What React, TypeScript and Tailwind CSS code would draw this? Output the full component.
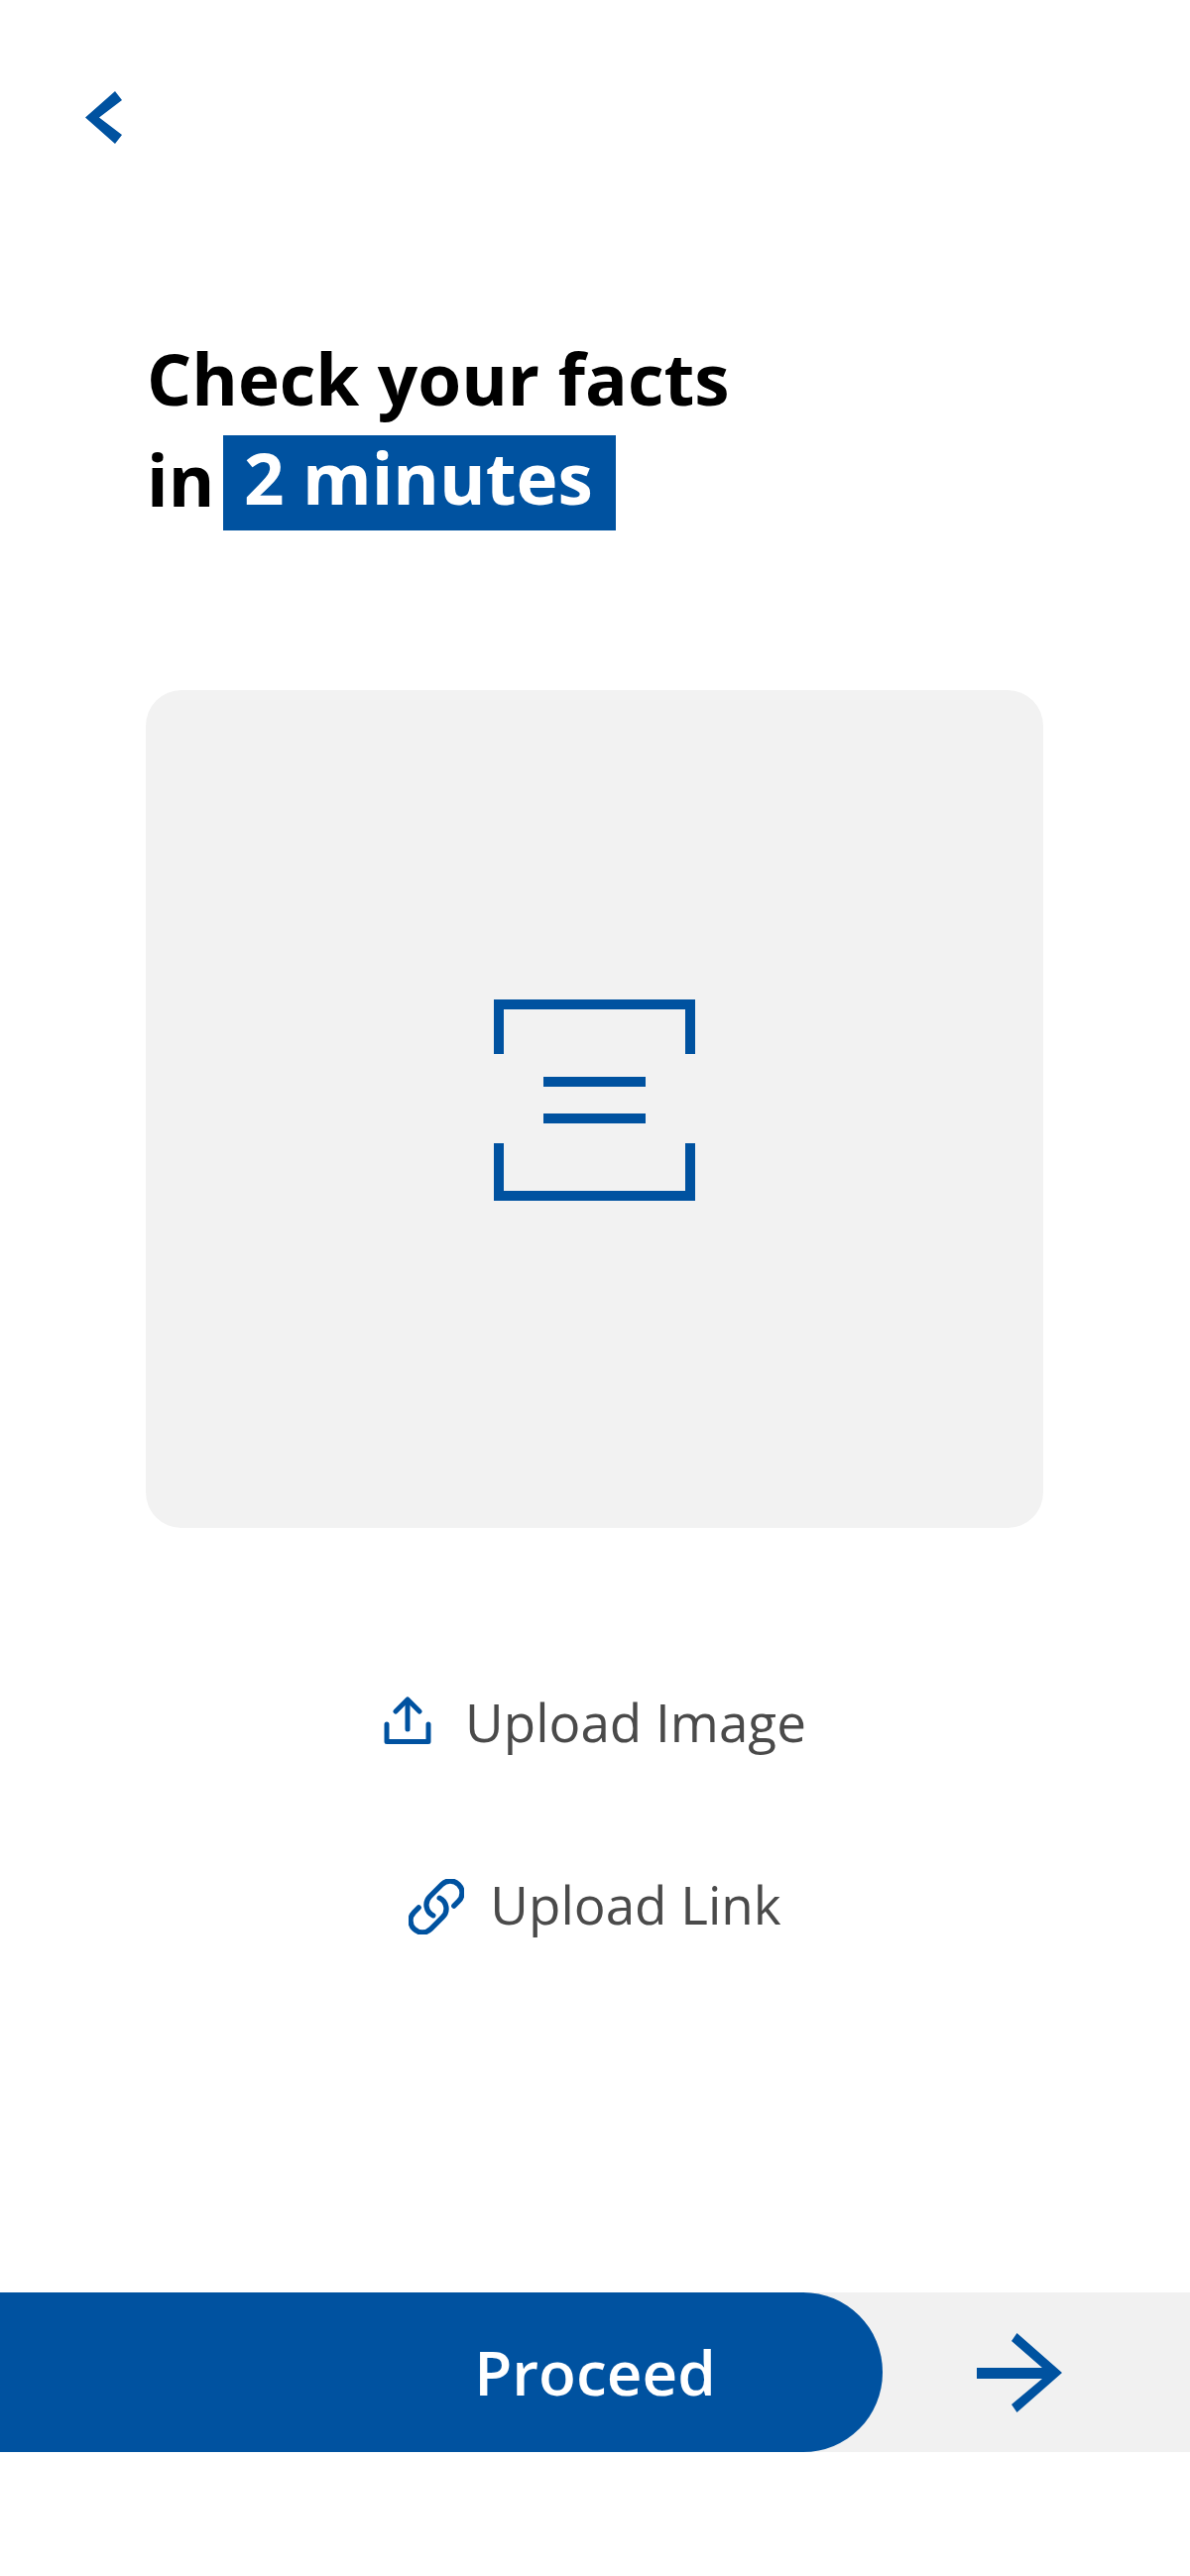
export default function App() {
  return (
    <div className="flex flex-col w-[1200px] h-[2598px] bg-white font-['Open_Sans',sans-serif] overflow-hidden">
      <div className="pl-[86px] pt-[92px] h-[332px]">
        <svg width="37" height="53" viewBox="0 0 37 53" className="block">
          <polygon points="30,0 37,9 14,26.5 37,44 30,53 0,26.5" fill="#0052a0" />
        </svg>
      </div>
      <h1 className="pl-[148px] text-[71px] leading-[100px] font-bold text-black">
        <div>Check your facts</div>
        <div className="flex items-center">
          <span>in</span>
          <span className="ml-[9px] mt-[7px] h-[96px] w-[396px] pb-[10px] pr-[3px] flex items-center justify-center bg-[#0052a0] text-white">2 minutes</span>
        </div>
      </h1>
      <div className="mt-[161px] ml-[147px] w-[905px] h-[845px] rounded-[36px] bg-[#f2f2f2] flex items-center justify-center pb-[18px]">
        <svg width="203" height="203" viewBox="0 0 203 203" fill="none" stroke="#0052a0" strokeWidth="10">
          <path d="M5 55 V5 H198 V55" />
          <path d="M50 83 H153" />
          <path d="M50 120 H153" />
          <path d="M5 145 V198 H198 V145" />
        </svg>
      </div>
      <div className="mt-[170px] flex items-center justify-center gap-[34px] h-[50px] text-[53px] leading-[50px] text-[#4a4a4a]">
        <svg width="48" height="48" viewBox="0 0 48 48" fill="none" stroke="#0052a0" strokeWidth="5" strokeLinecap="round" strokeLinejoin="round" className="shrink-0 -mt-[2px]">
          <path d="M3 28 V45.500 H45 V28" />
          <path d="M24 33 V4" />
          <path d="M12 15 L24 3 L36 15" />
        </svg>
        <span className="relative top-[1px]">Upload Image</span>
      </div>
      <div className="mt-[134px] flex items-center justify-center gap-[26px] h-[50px] text-[53px] leading-[50px] text-[#4a4a4a]">
        <svg width="56" height="56" viewBox="1.5 1.5 21 21" fill="none" stroke="#0052a0" strokeWidth="2" strokeLinecap="round" strokeLinejoin="round" className="shrink-0 mt-[5px]">
          <path d="M13.19 8.688a4.5 4.5 0 0 1 1.242 7.244l-4.5 4.5a4.5 4.5 0 0 1-6.364-6.364l1.757-1.757m13.35-.622 1.757-1.757a4.5 4.5 0 0 0-6.364-6.364l-4.5 4.5a4.5 4.5 0 0 0 1.242 7.244" />
        </svg>
        <span className="relative top-[1px]">Upload Link</span>
      </div>
      <div className="mt-[367px] h-[161px] bg-[#f1f1f1] flex items-center">
        <div className="w-[890px] h-full rounded-r-[80px] bg-[#0052a0] flex items-center justify-center pl-[310px] text-[62px] font-semibold text-white">
          Proceed
        </div>
        <svg width="86" height="80" viewBox="0 0 86 80" fill="#0052a0" className="ml-[95px] shrink-0">
          <polygon points="40.5,0 35,8 66,35 0,35 0,46 66,46 35,72 40.5,80 86,40" />
        </svg>
      </div>
    </div>
  );
}
